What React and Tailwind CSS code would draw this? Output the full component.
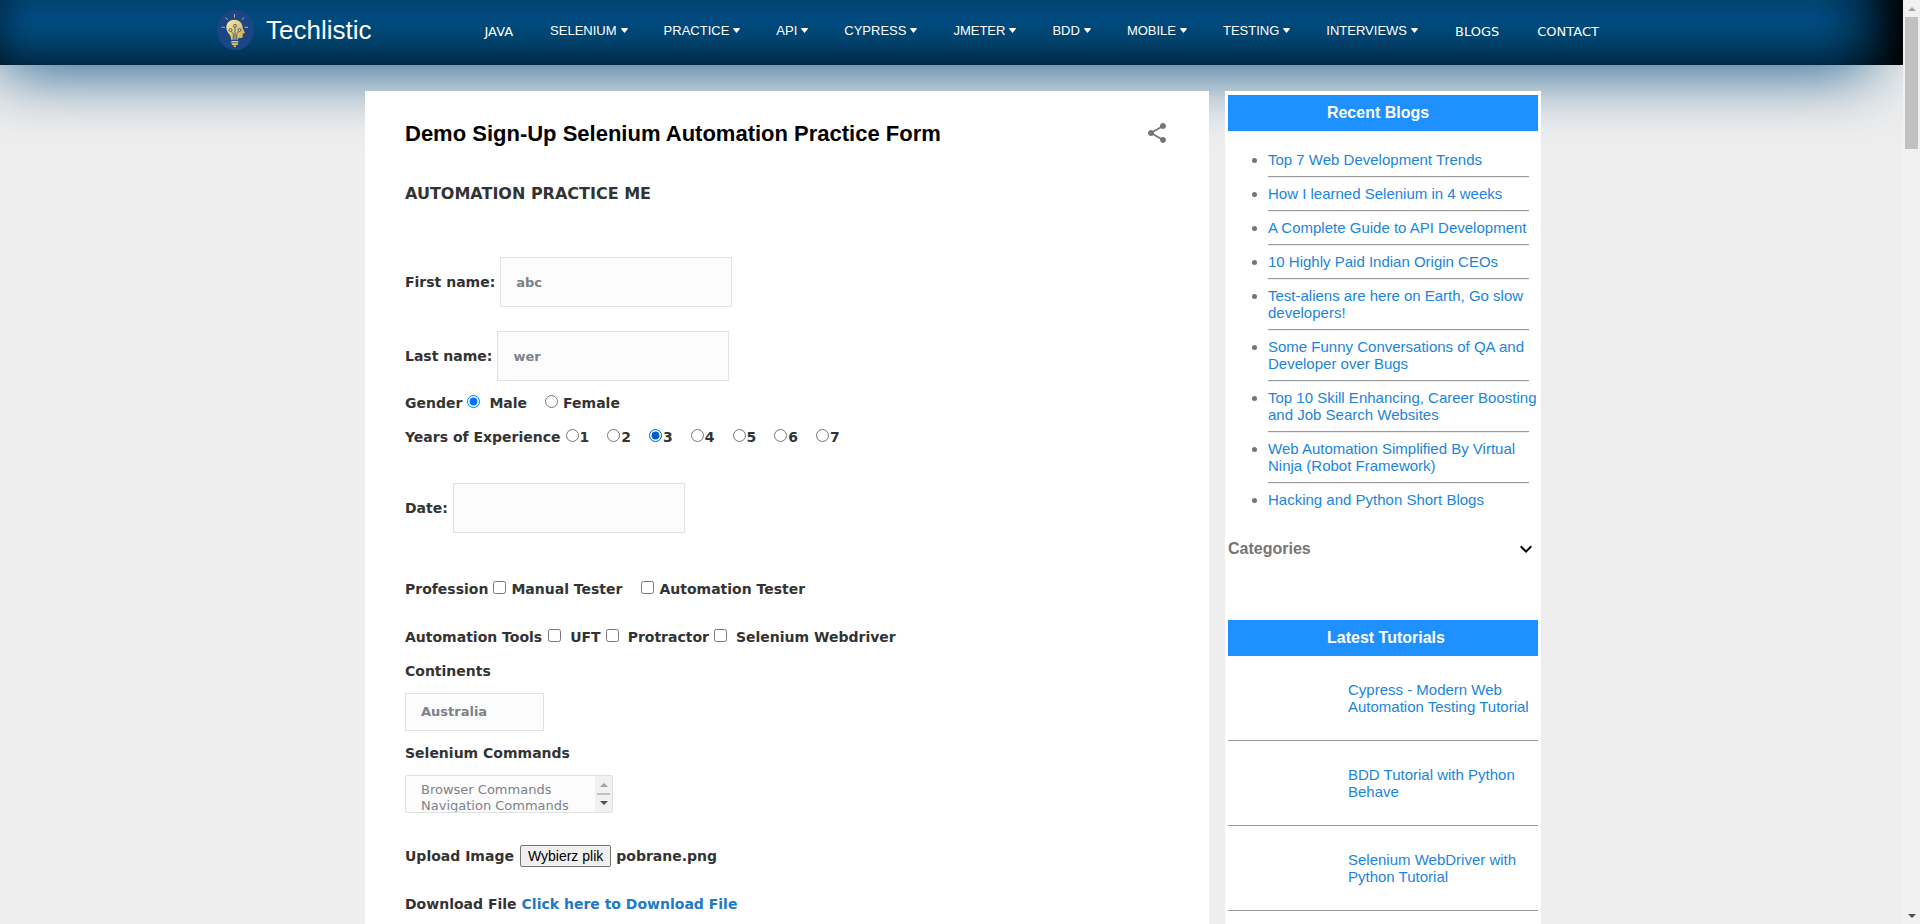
import React from "react";
import { MdShare, MdExpandMore } from "react-icons/md";

const NAV = [
  { label: "JAVA" },
  { label: "SELENIUM", menu: true },
  { label: "PRACTICE", menu: true },
  { label: "API", menu: true },
  { label: "CYPRESS", menu: true },
  { label: "JMETER", menu: true },
  { label: "BDD", menu: true },
  { label: "MOBILE", menu: true },
  { label: "TESTING", menu: true },
  { label: "INTERVIEWS", menu: true },
  { label: "BLOGS" },
  { label: "CONTACT" },
];

const BLOGS = [
  "Top 7 Web Development Trends",
  "How I learned Selenium in 4 weeks",
  "A Complete Guide to API Development",
  "10 Highly Paid Indian Origin CEOs",
  "Test-aliens are here on Earth, Go slow developers!",
  "Some Funny Conversations of QA and Developer over Bugs",
  "Top 10 Skill Enhancing, Career Boosting and Job Search Websites",
  "Web Automation Simplified By Virtual Ninja (Robot Framework)",
  "Hacking and Python Short Blogs",
];

const TUTORIALS = [
  "Cypress - Modern Web Automation Testing Tutorial",
  "BDD Tutorial with Python Behave",
  "Selenium WebDriver with Python Tutorial",
];

function Logo() {
  return (
    <svg viewBox="0 0 37 40" className="h-10 w-[37px]" aria-hidden="true">
      <defs>
        <linearGradient id="gold" x1="0" y1="0" x2="1" y2="1">
          <stop offset="0" stopColor="#f6ecae" />
          <stop offset="1" stopColor="#d9a441" />
        </linearGradient>
      </defs>
      <ellipse cx="18.5" cy="20" rx="18.5" ry="20" fill="#1b4583" />
      <g stroke="#c9c08a" strokeWidth="0.9" strokeLinecap="round">
        <path d="M17.5 4.5v2.6M8.8 7.8l1.6 1.8M26.8 7.8l-1.6 1.8M5 17.3h2.6M28 17.3h2.6" />
      </g>
      <path
        d="M17.5 9.7c-5 0-8.2 3.4-8.2 7.7 0 3.3 1.8 5.2 3.4 7.4 1 1.5 1.3 3 1.5 5h6.8c.1-1 .3-1.7.9-1.7h2.3c1 0 1.5-.6 1.5-1.5v-3.1h1.7c.5 0 .6-.5.4-.9l-2-4.2c-.1-5.2-3.3-8.7-8.3-8.7z"
        fill="url(#gold)"
      />
      <g fill="none" stroke="#4a6a78" strokeWidth="1">
        <circle cx="18" cy="15.8" r="1.5" />
        <circle cx="13.5" cy="20" r="1.5" />
        <circle cx="22.5" cy="20" r="1.5" />
        <path d="M18 17.3v13M14 21.4l2.3 2.4v6.5M22 21.4l-2.3 2.4v6.5" />
      </g>
      <path d="M14.3 31h7v1.5h-7zM14.3 33.3h7l-.8 1.7h-5.4zM16.8 35.6h2.2v1.3h-2.2z" fill="#e3c878" />
    </svg>
  );
}

function Header() {
  return (
    <div className="relative">
      <div className="absolute inset-y-0 left-0 right-8 shadow-[0_3px_68px_#004a7f]" />
      <header className="relative bg-[linear-gradient(to_left,#000000ee_0px,#000000cc_12px,#000000a0_23px,#00000070_35px,#00000040_50px,#00000018_68px,#00000000_90px),linear-gradient(to_right,#0004,#0001_20px,#0000_36px),linear-gradient(to_bottom,#004472,#004a7f_32%,#00446f_58%,#00375c_80%,#002a46)]">
        <div className="mx-auto flex h-[65px] max-w-[1469px] items-center pb-0.5">
          <a href="#" className="-mt-1 flex items-center gap-3 text-[26px] leading-8 text-white">
            <Logo />
            Techlistic
          </a>
          <nav className="ml-28 flex items-center gap-9 whitespace-nowrap text-[13px] leading-5 text-white">
            {NAV.map((n) =>
              n.menu ? (
                <button key={n.label} className="-mt-0.5 flex items-center gap-1">
                  {n.label}
                  <svg viewBox="0 0 8 5" className="h-[5px] w-[7px]" preserveAspectRatio="none" aria-hidden="true">
                    <path d="M.7 0h6.6q.9.1.4.9L4.5 4.6q-.5.5-1 0L.3.9Q-.2.1.7 0z" fill="#fff" />
                  </svg>
                </button>
              ) : (
                <a key={n.label} href="#" className="px-px font-[Verdana,'DejaVu_Sans',sans-serif]">
                  {n.label}
                </a>
              )
            )}
          </nav>
        </div>
      </header>
    </div>
  );
}

function TextRow({ id, label, value }) {
  return (
    <div className="flex h-[50px] items-center gap-[5px]">
      <label htmlFor={id}>{label}</label>
      <input
        id={id}
        type="text"
        defaultValue={value}
        className="h-[50px] w-[232px] border border-[#e1e1e1] bg-[#fcfcfc] px-[15px] text-[13px] font-bold text-[#7c818a]"
      />
    </div>
  );
}

function Option({ type, name, label, gap, checked, tone = "accent-[#0075ff]" }) {
  return (
    <label className={`flex items-center ${gap}`}>
      <input type={type} name={name} defaultChecked={checked} className={`mb-1 size-[13px] ${tone}`} />
      {label}
    </label>
  );
}

function PracticeForm() {
  return (
    <form className="mt-[45px] text-sm font-bold text-[#333]">
      <TextRow id="first" label="First name:" value="abc" />
      <div className="mt-6">
        <TextRow id="last" label="Last name:" value="wer" />
      </div>
      <div role="group" aria-label="Gender" className="mt-[5px] flex h-[34px] items-center">
        <span className="mr-[5px]">Gender</span>
        <Option type="radio" name="gender" label="Male" gap="mr-[18px] gap-[9px]" checked />
        <Option type="radio" name="gender" label="Female" gap="gap-[5px]" />
      </div>
      <div role="group" aria-label="Years of Experience" className="flex h-[34px] items-center">
        <span className="mr-[5px]">Years of Experience</span>
        <div className="flex gap-[18px]">
          {["1", "2", "3", "4", "5", "6", "7"].map((y) => (
            <Option
              key={y}
              type="radio"
              name="years"
              label={y}
              gap="gap-px"
              checked={y === "3"}
              tone="accent-[#005cc8]"
            />
          ))}
        </div>
      </div>
      <div className="mt-[29px]">
        <TextRow id="date" label="Date:" value="" />
      </div>
      <div role="group" aria-label="Profession" className="mt-[39px] flex h-[34px] items-center">
        <span className="mr-[5px]">Profession</span>
        <Option type="checkbox" name="profession" label="Manual Tester" gap="mr-[19px] gap-[5px]" />
        <Option type="checkbox" name="profession" label="Automation Tester" gap="gap-[5px]" />
      </div>
      <div role="group" aria-label="Automation Tools" className="mt-3.5 flex h-[34px] items-center gap-[5px]">
        <span className="pr-px">Automation Tools</span>
        <Option type="checkbox" name="tool" label="UFT" gap="gap-[9px]" />
        <Option type="checkbox" name="tool" label="Protractor" gap="gap-[9px]" />
        <Option type="checkbox" name="tool" label="Selenium Webdriver" gap="gap-[9px]" />
      </div>
      <label htmlFor="continents" className="flex h-[34px] items-center">
        Continents
      </label>
      <select
        id="continents"
        defaultValue="Australia"
        className="mt-[5px] block h-[38px] w-[139px] appearance-none border border-[#e1e1e1] bg-[#fcfcfc] px-[15px] text-[13px] font-bold text-[#7c818a]"
      >
        <option>Asia</option>
        <option>Europe</option>
        <option>Africa</option>
        <option>Australia</option>
      </select>
      <label htmlFor="commands" className="mt-[5px] flex h-[34px] items-center">
        Selenium Commands
      </label>
      <div className="mt-[5px] flex h-[38px] w-[208px] overflow-hidden rounded-[2px] border border-[#e1e1e1] bg-[#fcfcfc]">
        <select
          id="commands"
          multiple
          className="h-9 flex-1 overflow-hidden bg-transparent px-[13px] pt-1.5 text-[13px] font-normal text-[#7c818a] [scrollbar-width:none]"
        >
          <option className="p-0 px-0.5 leading-4">Browser Commands</option>
          <option className="p-0 px-0.5 leading-4">Navigation Commands</option>
          <option className="p-0 px-0.5 leading-4">Switch Commands</option>
          <option className="p-0 px-0.5 leading-4">Wait Commands</option>
        </select>
        <div className="flex w-[17px] flex-col items-center justify-center gap-1 bg-[#f1f1f1]" aria-hidden="true">
          <svg viewBox="0 0 8 4" className="h-1 w-2"><path d="M0 4l4-4 4 4z" fill="#a3a3a3" /></svg>
          <div className="my-0.5 h-0.5 w-[13px] bg-[#c1c1c1]" />
          <svg viewBox="0 0 8 4" className="h-1 w-2"><path d="M0 0l4 4 4-4z" fill="#505050" /></svg>
        </div>
      </div>
      <div className="mt-[26px] flex h-[34px] items-center gap-[5px]">
        <label htmlFor="upload" className="pr-px">Upload Image</label>
        <input id="upload" type="file" className="sr-only" />
        <button
          type="button"
          className="h-[22px] rounded-[2px] border border-[#767676] bg-[#efefef] px-[7px] font-['Liberation_Sans',Arial,sans-serif] text-sm font-normal leading-5 text-black"
        >
          Wybierz plik
        </button>
        <span>pobrane.png</span>
      </div>
      <div className="mt-3.5 flex h-[34px] items-center gap-[5px]">
        <span>Download File</span>
        <a href="#" className="text-[#2079c7]">Click here to Download File</a>
      </div>
    </form>
  );
}

function BarTitle({ children, pad }) {
  return (
    <h2 className={`h-9 bg-[#1e90ff] text-center text-base font-bold leading-[35px] text-white ${pad}`}>{children}</h2>
  );
}

function Sidebar() {
  return (
    <aside className="w-[316px] bg-white px-[3px] pt-1 text-[15px] leading-[17px] text-[#757575]">
      <BarTitle pad="pr-2.5">Recent Blogs</BarTitle>
      <ul className="mt-5 list-disc pl-10">
        {BLOGS.map((b, i) => (
          <li key={b}>
            <a href="#" className="block text-[#1c84dc]">{b}</a>
            {i < BLOGS.length - 1 && (
              <hr className="mb-[7px] mr-[9px] mt-2 h-0.5 border-b border-t border-b-[#eee] border-t-[#9a9a9a]" />
            )}
          </li>
        ))}
      </ul>
      <button className="mt-[29px] flex h-6 w-full items-center justify-between text-base font-bold">
        Categories
        <MdExpandMore className="size-6 text-black" />
      </button>
      <div className="mt-[59px]">
        <BarTitle pad="pl-1.5">Latest Tutorials</BarTitle>
        {TUTORIALS.map((t) => (
          <div key={t} className="flex h-[85px] items-center border-b border-[#9a9a9a] pl-[120px]">
            <a href="#" className="text-[#1c84dc]">{t}</a>
          </div>
        ))}
      </div>
    </aside>
  );
}

function PageScrollbar() {
  return (
    <div className="sticky top-0 flex h-screen w-[17px] shrink-0 flex-col items-center bg-[#f1f1f1]" aria-hidden="true">
      <div className="flex h-[17px] items-center">
        <svg viewBox="0 0 8 4" className="h-1 w-2"><path d="M0 4l4-4 4 4z" fill="#a3a3a3" /></svg>
      </div>
      <div className="h-[132px] w-[13px] bg-[#c1c1c1]" />
      <div className="mt-auto flex h-[17px] items-center">
        <svg viewBox="0 0 8 4" className="h-1 w-2"><path d="M0 0l4 4 4-4z" fill="#505050" /></svg>
      </div>
    </div>
  );
}

export default function App() {
  return (
    <div className="flex min-h-screen font-['Liberation_Sans',Arial,sans-serif]">
      <div className="flex min-w-0 flex-1 flex-col overflow-hidden bg-[#eee]">
        <Header />
        <div className="relative mx-auto mt-[26px] flex w-full max-w-[1179px] flex-1 gap-4 pl-[3px]">
          <main className="flex-1 bg-white px-10 pt-[30px] font-[Verdana,'DejaVu_Sans',sans-serif]">
            <div className="flex h-6 items-center justify-between">
              <h1 className="pt-0.5 font-['Liberation_Sans',Arial,sans-serif] text-[22px] font-bold leading-6 text-black">
                Demo Sign-Up Selenium Automation Practice Form
              </h1>
              <button aria-label="Share">
                <MdShare className="size-6 text-[#757575]" />
              </button>
            </div>
            <h2 className="mt-[31px] flex h-9 items-center text-base font-bold text-[#333]">AUTOMATION PRACTICE ME</h2>
            <PracticeForm />
          </main>
          <Sidebar />
        </div>
      </div>
      <PageScrollbar />
    </div>
  );
}
